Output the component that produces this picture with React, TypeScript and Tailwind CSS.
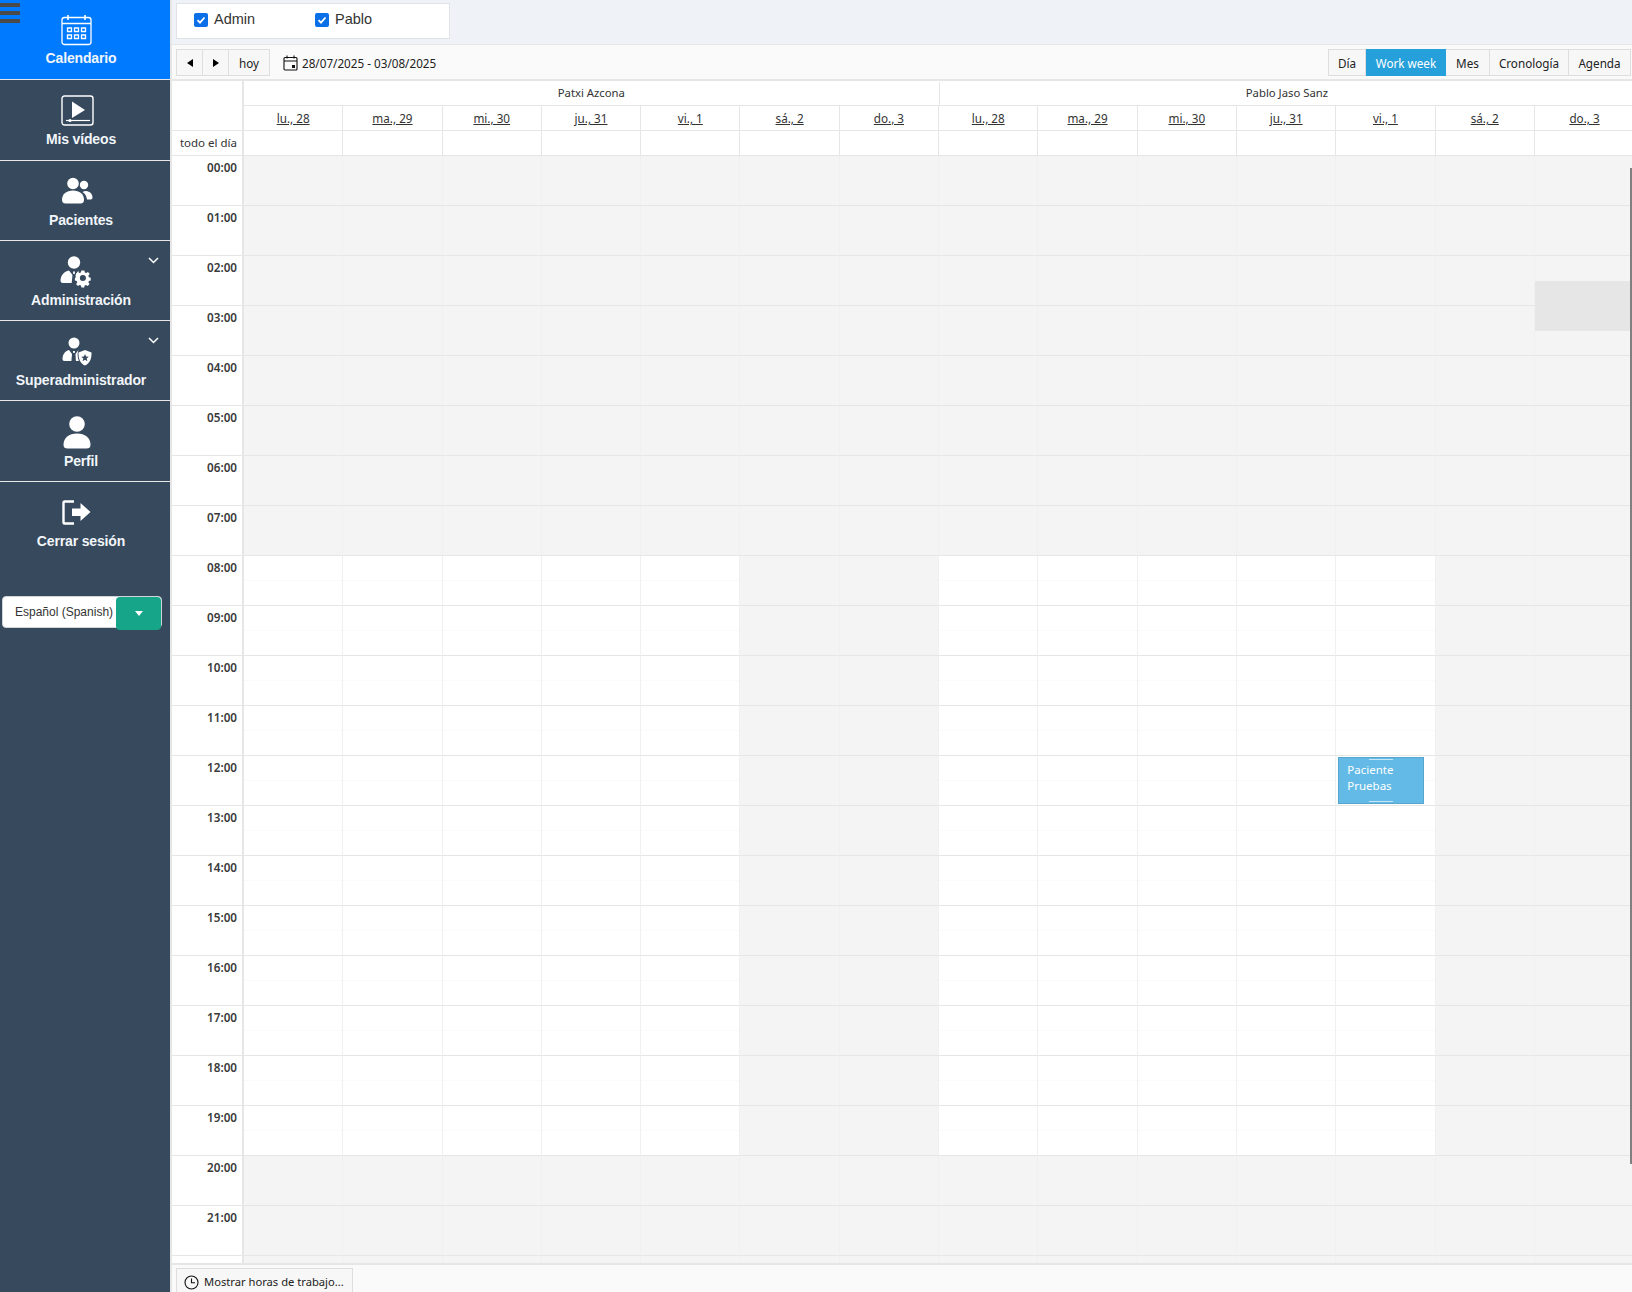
import type { ReactNode } from 'react';

const DAYS = ['lu., 28', 'ma., 29', 'mi., 30', 'ju., 31', 'vi., 1', 'sá., 2', 'do., 3'];
const HOURS = Array.from({ length: 23 }, (_, i) => `${String(i).padStart(2, '0')}:00`);
const COLS = Array.from({ length: 14 }, (_, i) => i);

function CalendarIcon() {
  return (
    <svg width="32" height="32" viewBox="0 0 32 32" fill="none" stroke="white" strokeWidth="1.3">
      <rect x="1" y="3.5" width="29" height="27" rx="2.5" />
      <path d="M1 9.5h29M7 1v5M24 1v5" strokeWidth="1.6" />
      <path d="M6.5 14h4v3.5h-4zM13.5 14h4v3.5h-4zM20.5 14h4v3.5h-4zM6.5 21h4v3.5h-4zM13.5 21h4v3.5h-4zM20.5 21h4v3.5h-4z" />
    </svg>
  );
}

function VideoIcon() {
  return (
    <svg width="33" height="31" viewBox="0 0 33 31" fill="none">
      <rect x="1" y="1" width="31" height="29" rx="2.5" stroke="white" strokeWidth="1.4" />
      <path d="M11 6.5 24 15 11 23z" fill="white" />
      <path d="M5 25.5h24" stroke="white" strokeWidth="1.2" />
      <circle cx="9" cy="25.5" r="1.6" fill="white" />
    </svg>
  );
}

function PeopleIcon() {
  return (
    <svg width="32" height="28" viewBox="0 0 32 28" fill="white">
      <circle cx="23" cy="8" r="4.2" />
      <path d="M25 14c4 .4 6.500 3 6.500 6.500 0 1.500-1 2-2.500 2h-3c-.5-3.500-2-6-4.500-7.500 1-.7 2.200-1 3.500-1z" />
      <circle cx="12" cy="6.500" r="5.800" />
      <path d="M12 13.500c6.500 0 11 3.500 11 9.500 0 2.500-1.500 3.500-3.500 3.500h-15C2.500 26.500 1 25.500 1 23c0-6 4.500-9.500 11-9.500z" />
    </svg>
  );
}

function AdminIcon() {
  return (
    <svg width="34" height="32" viewBox="0 0 34 32" fill="white">
      <circle cx="14" cy="6.500" r="6.200" />
      <path d="M9 14.500 12.500 19l-.8 8H3c-1.500 0-2.500-.8-2.500-2.500 0-5 3.500-8.800 8.500-10z" />
      <path d="M18.500 14.500 15.500 19l.5 4 2.500-5.500z" />
      <path d="M13 15.500h2l-.2 2.500h-1.600z" />
      <path
        fillRule="evenodd"
        d="M23.500 14h4l.6 2.600 1.800.8 2.300-1.400 2.300 2.800-1.700 2 .5 2 2.500.8v3.600l-2.500.8-.5 2 1.500 2-2.500 2.500-2.200-1.400-1.800.8-.6 2.600h-3.600l-.6-2.600-1.800-.8-2.200 1.400-2.500-2.500 1.500-2-.5-2-2.500-.8v-3.600l2.500-.8.5-2-1.700-2 2.500-2.800 2.200 1.400 1.800-.8zM25.500 20a4 4 0 1 0 0 8 4 4 0 0 0 0-8z"
        transform="translate(3.500 3.800) scale(.76)"
      />
    </svg>
  );
}

function SuperAdminIcon() {
  return (
    <svg width="30" height="29" viewBox="0 0 30 29" fill="white">
      <circle cx="12" cy="6" r="5.500" />
      <path d="M7 13 10 17l-.6 7H2.500C1 24 .5 23 .5 22c0-4.500 2.500-8 6.500-9z" />
      <path d="M16.500 13 13.500 17l.4 7h3c-.8-2-1.300-4.500-1.300-7.500z" />
      <path d="M11 14h2l-.2 2h-1.600z" />
      <path
        fillRule="evenodd"
        d="M23 13l6.500 2.500c.3 6.500-2 11-6.500 13-4.500-2-6.800-6.500-6.500-13zM23 17l-1.100 2.500-2.700.2 2.100 1.800-.7 2.700 2.400-1.500 2.400 1.500-.7-2.700 2.100-1.800-2.700-.2z"
      />
    </svg>
  );
}

function ProfileIcon() {
  return (
    <svg width="28" height="33" viewBox="0 0 28 33" fill="white">
      <circle cx="14" cy="8" r="7.800" />
      <path d="M14 17.500c8 0 13.500 4.500 13.500 11 0 3-1.500 4-4 4h-19c-2.500 0-4-1-4-4 0-6.500 5.500-11 13.500-11z" />
    </svg>
  );
}

function LogoutIcon() {
  return (
    <svg width="30" height="25" viewBox="0 0 30 25" fill="none">
      <path d="M12 1.500H2.500A1 1 0 0 0 1.500 2.500v20a1 1 0 0 0 1 1H12" stroke="white" strokeWidth="2.400" />
      <path d="M10 8.500h8.500V3L28.500 12 18.500 21v-5H10z" fill="white" />
    </svg>
  );
}

function Chevron() {
  return (
    <svg width="11" height="7" viewBox="0 0 11 7" fill="none" stroke="white" strokeWidth="1.500">
      <path d="M1 1l4.500 4.500L10 1" />
    </svg>
  );
}

function SideItem({ icon, label, active, chevron, iconTop, labelTop }: { icon: ReactNode; label: string; active?: boolean; chevron?: boolean; iconTop: string; labelTop: string }) {
  return (
    <div className={`relative h-[80.3px] shrink-0 border-b border-[#e8e8e8] ${active ? 'bg-[#007bff]' : ''}`}>
      <div className={`flex w-[154px] items-end justify-center ${iconTop}`}>{icon}</div>
      <div className={`absolute left-0 w-[162px] text-center text-[14px] font-bold leading-[16px] tracking-[-0.15px] text-[#f2f6fa] ${labelTop}`}>{label}</div>
      {chevron && (
        <div className="absolute left-[148px] top-[16px]">
          <Chevron />
        </div>
      )}
    </div>
  );
}

function Sidebar() {
  return (
    <aside className="relative flex w-[170px] shrink-0 flex-col bg-[#36495d] font-['Liberation_Sans',sans-serif]">
      <div className="absolute left-0 top-[3px] z-10 flex w-[20px] flex-col gap-[4px]">
        <div className="h-[4px] bg-[#4a4a4a]" />
        <div className="h-[4px] bg-[#4a4a4a]" />
        <div className="h-[4px] bg-[#4a4a4a]" />
      </div>
      <SideItem active icon={<CalendarIcon />} label="Calendario" iconTop="pt-[12px] h-[46px]" labelTop="top-[50px]" />
      <SideItem icon={<VideoIcon />} label="Mis vídeos" iconTop="pt-[15px] h-[46px]" labelTop="top-[51px]" />
      <SideItem icon={<PeopleIcon />} label="Pacientes" iconTop="pt-[16px] h-[44px]" labelTop="top-[51px]" />
      <SideItem chevron icon={<AdminIcon />} label="Administración" iconTop="pt-[15px] h-[47px]" labelTop="top-[51px]" />
      <SideItem chevron icon={<SuperAdminIcon />} label="Superadministrador" iconTop="pt-[13px] h-[45px]" labelTop="top-[51px]" />
      <SideItem icon={<ProfileIcon />} label="Perfil" iconTop="pt-[15px] h-[48px]" labelTop="top-[52px]" />
      <div className="relative h-[80px] shrink-0">
        <div className="flex h-[43px] w-[154px] items-end justify-center pt-[16px]">
          <LogoutIcon />
        </div>
        <div className="absolute left-0 top-[51px] w-[162px] text-center text-[14px] font-bold leading-[16px] tracking-[-0.15px] text-[#f2f6fa]">Cerrar sesión</div>
      </div>
      <div className="ml-[2px] mt-[34px] flex h-[32px] w-[160px] items-center justify-between rounded-[4px] border border-[#cfd4d8] bg-white">
        <span className="pl-[12px] text-[12px] text-[#333333]">Español (Spanish)</span>
        <div className="flex h-[33px] w-[45px] items-center justify-center self-start rounded-[4px] bg-[#17a589]">
          <div className="h-0 w-0 border-x-[4px] border-t-[5px] border-x-transparent border-t-white" />
        </div>
      </div>
    </aside>
  );
}

function Check({ label, gap }: { label: string; gap: string }) {
  return (
    <div className={`flex items-center gap-[6px] ${gap}`}>
      <div className="flex h-[14px] w-[14px] items-center justify-center rounded-[2px] bg-[#0b6fe8]">
        <svg width="10" height="10" viewBox="0 0 10 10" fill="none" stroke="white" strokeWidth="1.800">
          <path d="M1.500 5.200 4 7.700 8.500 2.500" />
        </svg>
      </div>
      <span className="text-[14.500px] text-[#333333]">{label}</span>
    </div>
  );
}

function ToolButton({ children, className }: { children: ReactNode; className: string }) {
  return <div className={`flex h-[27px] items-center justify-center border border-[#dedede] bg-[#f7f7f7] pt-[3px] text-[11.7px] text-[#222222] ${className}`}>{children}</div>;
}

function Toolbar() {
  return (
    <div className="flex h-[36px] shrink-0 items-start justify-between border-b-2 border-[#e6e6e6] bg-[#fafafa] pl-[4px] pr-[1px] pt-[4px]">
      <div className="flex items-center">
        <ToolButton className="w-[27px]">
          <div className="-mt-[2px] h-0 w-0 border-y-[4px] border-r-[6px] border-y-transparent border-r-black" />
        </ToolButton>
        <ToolButton className="-ml-px w-[27px]">
          <div className="-mt-[2px] h-0 w-0 border-y-[4px] border-l-[6px] border-y-transparent border-l-black" />
        </ToolButton>
        <ToolButton className="-ml-px w-[42px]">hoy</ToolButton>
        <svg className="ml-[13px]" width="15" height="16" viewBox="0 0 15 16" fill="none" stroke="#111" strokeWidth="1.100">
          <rect x="1" y="2.500" width="13" height="12.500" rx="1" />
          <path d="M1 6h13M4 .5v3M11 .5v3" />
          <rect x="9" y="10" width="3" height="3" fill="#111" stroke="none" />
        </svg>
        <span className="ml-[4px] pt-[3px] text-[11.7px] text-[#222222]">28/07/2025 - 03/08/2025</span>
      </div>
      <div className="flex items-center">
        <ToolButton className="w-[38px]">Día</ToolButton>
        <div className="flex h-[27px] w-[80px] items-center justify-center bg-[#26a0da] pt-[3px] text-[11.7px] text-white">Work week</div>
        <ToolButton className="w-[44px] border-l-0">Mes</ToolButton>
        <ToolButton className="-ml-px w-[80px]">Cronología</ToolButton>
        <ToolButton className="-ml-px w-[63px]">Agenda</ToolButton>
      </div>
    </div>
  );
}

function CalendarHeader() {
  return (
    <div className="flex shrink-0 text-[11.7px] text-[#333333]">
      <div className="flex w-[72px] shrink-0 flex-col border-r-2 border-[#e6e6e6]">
        <div className="h-[49px]" />
        <div className="flex h-[26px] items-center justify-end border-y border-[#e6e6e6] pr-[5px] text-[11.500px]">todo el día</div>
      </div>
      <div className="min-w-0 flex-1 overflow-hidden">
        <div className="flex h-[25px] w-[1390.200px] border-b border-[#e6e6e6] pt-[1px] text-[11.300px]">
          <div className="flex flex-1 items-center justify-center border-r border-[#e6e6e6]">Patxi Azcona</div>
          <div className="flex flex-1 items-center justify-center">Pablo Jaso Sanz</div>
        </div>
        <div className="grid h-[24px] grid-cols-[repeat(14,99.3px)]">
          {COLS.map(i => (
            <div key={i} className="flex items-center justify-center border-r border-[#e6e6e6] pt-[1px] underline last:border-r-0">
              {DAYS[i % 7]}
            </div>
          ))}
        </div>
        <div className="grid h-[26px] grid-cols-[repeat(14,99.3px)] border-y border-[#e6e6e6]">
          {COLS.map(i => (
            <div key={i} className="border-r border-[#e6e6e6] last:border-r-0" />
          ))}
        </div>
      </div>
    </div>
  );
}

function HourRow({ hour, label }: { hour: number; label: string }) {
  return (
    <div className="flex h-[50px] shrink-0">
      <div className="w-[72px] shrink-0 border-b border-r-2 border-[#e6e6e6] bg-white pr-[5px] pt-[2px] text-right text-[11.7px] font-semibold leading-[18px] text-[#3a3a3a]">
        {hour < 22 ? label : ''}
      </div>
      <div className="grid min-w-0 flex-1 grid-cols-[repeat(14,99.3px)] overflow-hidden">
        {COLS.map(i => {
          const weekend = i % 7 >= 5;
          const working = !weekend && hour >= 8 && hour < 20;
          return (
            <div key={i} className={`relative flex flex-col border-b border-r border-b-[#e6e6e6] border-r-[#f0f0f0] last:border-r-0 ${working ? 'bg-white' : 'bg-[#f4f4f4]'}`}>
              <div className={`h-[25px] border-b border-dotted ${working ? 'border-[#f7f7f7]' : 'border-[#f4f4f4]'}`} />
              {i === 13 && hour === 2 && <div className="absolute bottom-[-1px] left-0 right-0 h-[25px] bg-[#e6e6e6]" />}
              {i === 13 && hour === 3 && <div className="absolute left-0 right-0 top-0 z-10 h-[25px] bg-[#e6e6e6]" />}
              {i === 11 && hour === 12 && (
                <div className="absolute left-[2px] top-[1px] z-10 h-[47px] w-[86px] border border-[#58a6cc] bg-[#63bae6] pl-[8px] pt-[4px] text-[11.500px] leading-[16px] text-white">
                  <div className="absolute left-[30px] top-[1px] h-px w-[24px] bg-[#c4e6f7]" />
                  Paciente
                  <br />
                  Pruebas
                  <div className="absolute bottom-[1px] left-[30px] h-px w-[24px] bg-[#c4e6f7]" />
                </div>
              )}
            </div>
          );
        })}
      </div>
    </div>
  );
}

export default function App() {
  return (
    <div className="flex h-[1292px] w-[1632px] overflow-hidden bg-white">
      <Sidebar />
      <main className="flex min-w-0 flex-1 flex-col border-l-2 border-[#e6e6e6] font-['Noto_Sans',sans-serif]">
        <div className="flex h-[45px] shrink-0 items-start border-b border-[#e6e6e6] bg-[#eff2f7] pl-[4px] pt-[3px] font-['Liberation_Sans',sans-serif]">
          <div className="flex h-[36px] w-[274px] items-center border border-[#dfe2e6] bg-white pb-[2px] pl-[17px]">
            <Check label="Admin" gap="w-[121px]" />
            <Check label="Pablo" gap="" />
          </div>
        </div>
        <Toolbar />
        <CalendarHeader />
        <div className="relative min-h-0 flex-1 overflow-hidden">
          {HOURS.map((label, hour) => (
            <HourRow key={label} hour={hour} label={label} />
          ))}
          <div className="absolute right-0 top-[12px] z-20 h-[996px] w-[2px] bg-[#808080]" />
        </div>
        <div className="flex h-[29px] shrink-0 items-start border-t-2 border-[#e6e6e6] bg-[#fafafa] pl-[4px] pt-[3px]">
          <div className="flex h-[28px] w-[177px] items-center gap-[5px] whitespace-nowrap border border-[#dedede] bg-[#f7f7f7] pl-[7px] text-[11.200px] text-[#222222]">
            <svg width="15" height="15" viewBox="0 0 15 15" fill="none" stroke="#111" strokeWidth="1.100">
              <circle cx="7.500" cy="7.500" r="6.500" />
              <path d="M7.500 3.500v4.300h3.500" />
            </svg>
            Mostrar horas de trabajo...
          </div>
        </div>
      </main>
    </div>
  );
}
